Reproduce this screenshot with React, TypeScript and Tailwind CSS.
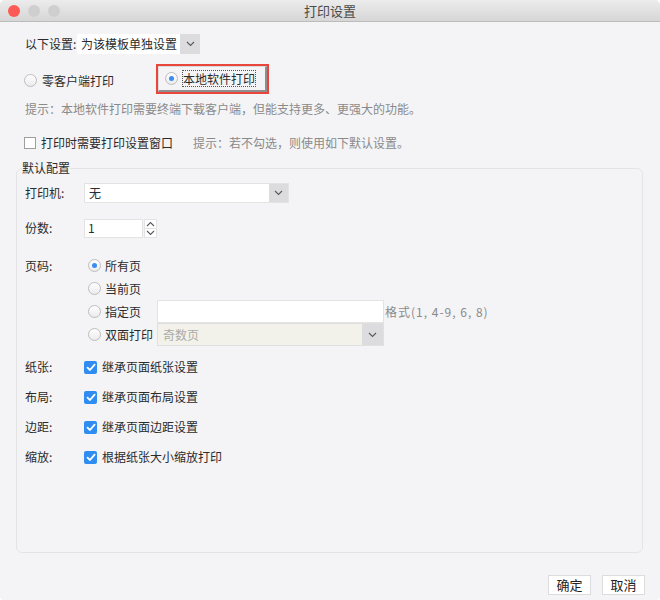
import React from "react";

function Chevron({ className = "" }: { className?: string }) {
  return (
    <svg width="9" height="6" viewBox="0 0 9 6" className={className}>
      <path d="M1 1 L4.5 4.5 L8 1" fill="none" stroke="#5a5a5a" strokeWidth="1.1" />
    </svg>
  );
}

function Radio({ checked }: { checked?: boolean }) {
  return (
    <span className="w-[13px] h-[13px] rounded-full border border-[#bdbdbd] bg-gradient-to-b from-white to-[#ebebeb] flex items-center justify-center shrink-0">
      {checked && <span className="w-[5px] h-[5px] rounded-full bg-[#3a8cf3]" />}
    </span>
  );
}

function CheckOn() {
  return (
    <span className="w-[13px] h-[13px] rounded-[2px] bg-[#2f8df2] flex items-center justify-center shrink-0">
      <svg width="10" height="9" viewBox="0 0 10 9">
        <path d="M1.5 4.6 L4 7 L8.6 1.6" fill="none" stroke="white" strokeWidth="1.8" strokeLinecap="round" strokeLinejoin="round" />
      </svg>
    </span>
  );
}

function CheckRow({ label, text, first }: { label: string; text: string; first?: boolean }) {
  return (
    <div className={`flex items-center h-[20px] pl-[8px] ${first ? "mt-[11px]" : "mt-[10px]"}`}>
      <span className="w-[59px]">{label}</span>
      <CheckOn />
      <span className="ml-[5px]">{text}</span>
    </div>
  );
}

export default function App() {
  return (
    <div className="w-[660px] h-[600px] bg-white">
      <div className="w-[660px] h-[600px] bg-[#f4f4f6] rounded-t-[5px] rounded-b-[4px] overflow-hidden flex flex-col text-[12px] leading-[16px] text-[#2b2b2b] font-['Noto_Sans_CJK_SC','Noto_Sans',sans-serif]">
        {/* title bar */}
        <div className="h-[22px] shrink-0 relative flex items-center bg-gradient-to-b from-[#ececec] to-[#d6d6d6] border-b border-[#bcbcbc]">
          <div className="flex items-center gap-[8px] ml-[8px]">
            <span className="w-[12px] h-[12px] rounded-full bg-[#fc5a55]" />
            <span className="w-[12px] h-[12px] rounded-full bg-[#cfcfcf]" />
            <span className="w-[12px] h-[12px] rounded-full bg-[#cfcfcf]" />
          </div>
          <div className="absolute inset-0 flex items-center justify-center text-[13px] text-[#4a4a4a]">打印设置</div>
        </div>

        {/* content */}
        <div className="flex-1 flex flex-col pl-[16px] pr-[17px] min-h-0">
          {/* row 1 */}
          <div className="flex items-center h-[20px] mt-[12px] ml-[9px]">
            <span className="w-[52px] whitespace-nowrap">以下设置:</span>
            <div className="flex h-[20px] w-[123px] bg-white">
              <span className="flex-1 pl-[4px] flex items-center whitespace-nowrap">为该模板单独设置</span>
              <span className="w-[20px] bg-[#dcdcdf] flex items-center justify-center">
                <Chevron />
              </span>
            </div>
          </div>

          {/* row 2 */}
          <div className="flex items-center h-[30px] mt-[10px] ml-[8px]">
            <div className="w-[132px] flex items-center gap-[5px] pt-[3px]">
              <Radio />
              <span>零客户端打印</span>
            </div>
            <div className="w-[113px] h-[30px] border-2 border-[#e8463c]">
              <div className="w-full h-full border-t border-l border-[#dadada] border-r-2 border-b-2 border-r-[#8f8f8f] border-b-[#8f8f8f] flex items-center pl-[6px]">
                <Radio checked />
                <span className="ml-[4px] border border-dotted border-[#555] leading-[15px]">本地软件打印</span>
              </div>
            </div>
          </div>

          {/* hint */}
          <div className="h-[16px] mt-[7px] ml-[9px] text-[#8a8a8a]">
            提示：本地软件打印需要终端下载客户端，但能支持更多、更强大的功能。
          </div>

          {/* checkbox row */}
          <div className="flex items-center h-[16px] mt-[18px] ml-[8px]">
            <span className="w-[12px] h-[12px] border border-[#9e9e9e] bg-white shrink-0" />
            <span className="ml-[5px]">打印时需要打印设置窗口</span>
            <span className="ml-[20px] text-[#8a8a8a]">提示：若不勾选，则使用如下默认设置。</span>
          </div>

          {/* group */}
          <fieldset className="flex-1 min-h-0 mt-[9px] border border-[#e4e4e7] rounded-[6px]">
            <legend className="ml-[5px] h-[16px] leading-[16px]">默认配置</legend>

            <div className="flex items-center h-[20px] mt-[7px] pl-[8px]">
              <span className="w-[59px]">打印机:</span>
              <div className="flex w-[205px] h-[20px] bg-white border border-[#e3e3e3]">
                <span className="flex-1 pl-[4px] flex items-center">无</span>
                <span className="w-[19px] bg-[#dcdcdf] flex items-center justify-center">
                  <Chevron />
                </span>
              </div>
            </div>

            <div className="flex items-center h-[20px] mt-[15px] pl-[8px]">
              <span className="w-[59px]">份数:</span>
              <div className="w-[59px] h-[19px] bg-white border border-[#e3e3e3] pl-[3px] flex items-center">1</div>
              <div className="ml-[1px] w-[13px] h-[19px] flex flex-col bg-white border border-[#e3e3e3]">
                <span className="flex-1 flex items-center justify-center border-b border-[#e3e3e3]">
                  <svg width="9" height="6" viewBox="0 0 9 6">
                    <path d="M1 5 L4.5 1.5 L8 5" fill="none" stroke="#5a5a5a" strokeWidth="1.1" />
                  </svg>
                </span>
                <span className="flex-1 flex items-center justify-center">
                  <Chevron />
                </span>
              </div>
            </div>

            <div className="flex mt-[16px] pl-[8px]">
              <span className="w-[59px] h-[23px] flex items-center">页码:</span>
              <div className="flex flex-col">
                <div className="flex items-center h-[23px]">
                  <div className="w-[73px] pl-[4px] flex items-center gap-[4px]">
                    <Radio checked />
                    <span>所有页</span>
                  </div>
                </div>
                <div className="flex items-center h-[23px]">
                  <div className="w-[73px] pl-[4px] flex items-center gap-[4px]">
                    <Radio />
                    <span>当前页</span>
                  </div>
                </div>
                <div className="flex items-center h-[23px]">
                  <div className="w-[73px] pl-[4px] flex items-center gap-[4px]">
                    <Radio />
                    <span>指定页</span>
                  </div>
                  <div className="w-[227px] h-[23px] bg-white border border-[#e3e3e3]" />
                  <span className="ml-[1px] text-[#8a8a8a] tracking-[1px]">格式(1, 4-9, 6, 8)</span>
                </div>
                <div className="flex items-center h-[23px]">
                  <div className="w-[73px] pl-[4px] flex items-center gap-[4px]">
                    <Radio />
                    <span>双面打印</span>
                  </div>
                  <div className="flex w-[227px] h-[23px] bg-[#f3f2ea] border border-[#e0e0e0]">
                    <span className="flex-1 pl-[5px] flex items-center text-[#aaaaaa]">奇数页</span>
                    <span className="w-[21px] bg-[#dcdcdf] flex items-center justify-center">
                      <Chevron />
                    </span>
                  </div>
                </div>
              </div>
            </div>

            <CheckRow label="纸张:" text="继承页面纸张设置" first />
            <CheckRow label="布局:" text="继承页面布局设置" />
            <CheckRow label="边距:" text="继承页面边距设置" />
            <CheckRow label="缩放:" text="根据纸张大小缩放打印" />
          </fieldset>

          {/* buttons */}
          <div className="flex justify-end gap-[11px] -mr-[2px] mt-[22px] mb-[5px] shrink-0">
            <button className="w-[43px] h-[20px] bg-white border border-[#dcdcdc] text-[13px] leading-[18px] text-[#222]">确定</button>
            <button className="w-[43px] h-[20px] bg-white border border-[#dcdcdc] text-[13px] leading-[18px] text-[#222]">取消</button>
          </div>
        </div>
      </div>
    </div>
  );
}
